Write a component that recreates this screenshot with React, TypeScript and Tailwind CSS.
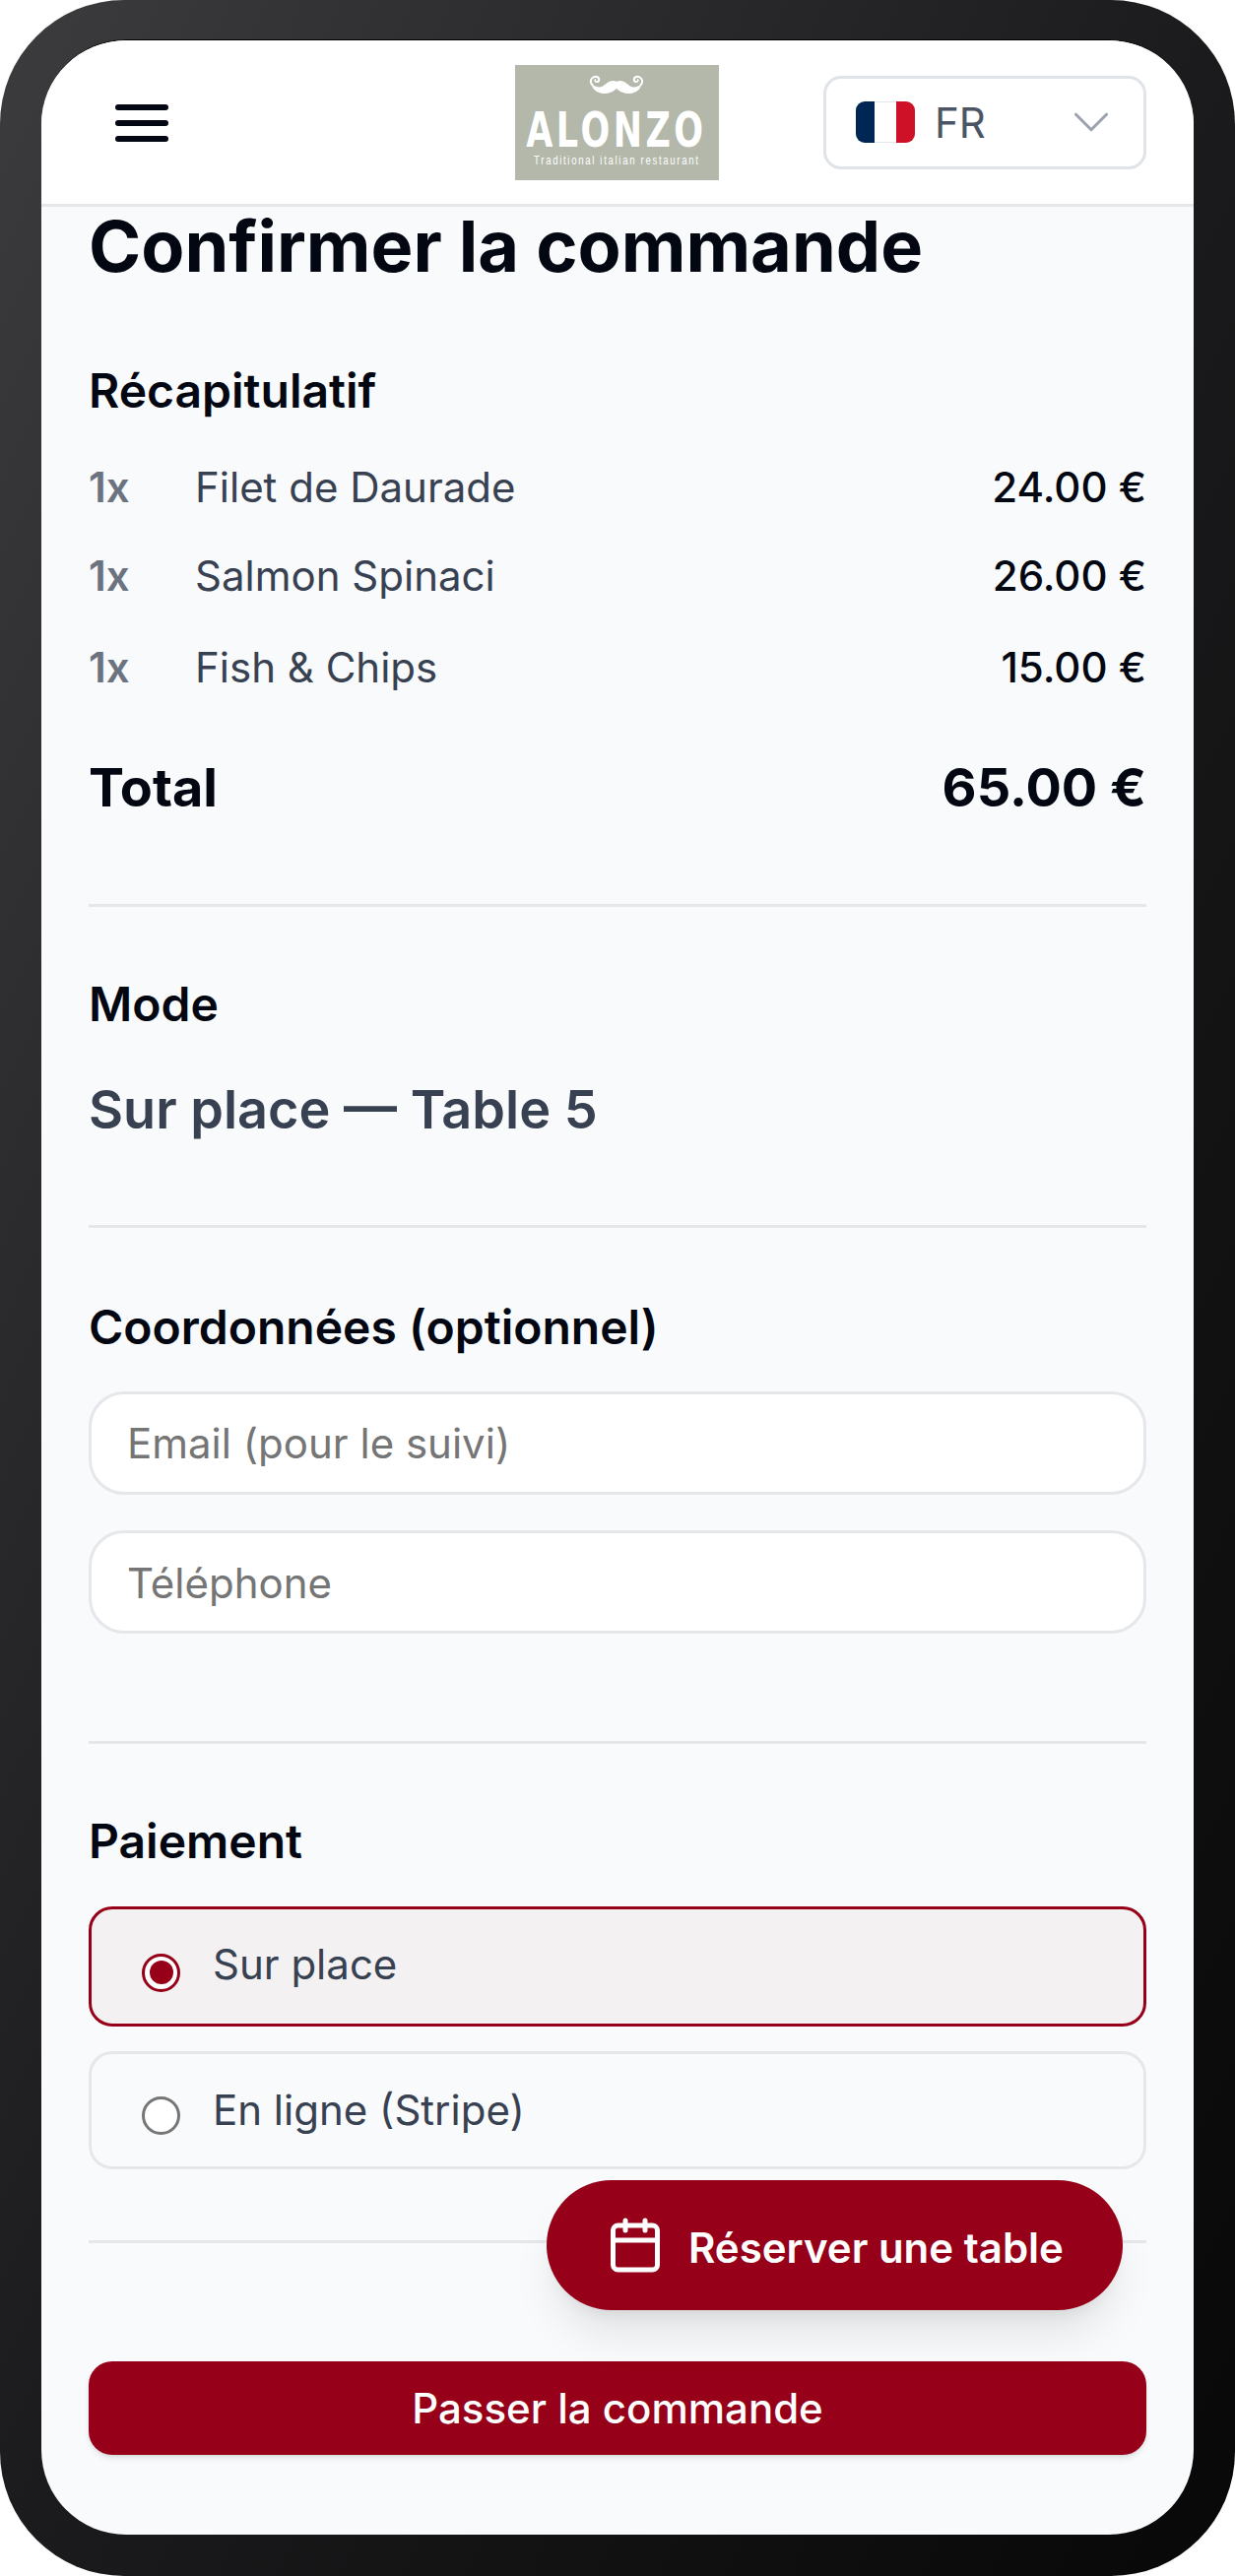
import React from 'react';
import { ChevronDown, Calendar } from 'lucide-react';

const font = { fontFamily: 'Inter, sans-serif' };

const items = [
  { name: 'Filet de Daurade', price: '24.00 €' },
  { name: 'Salmon Spinaci', price: '26.00 €' },
  { name: 'Fish & Chips', price: '15.00 €' },
];

const Logo = () => (
  <div className="w-[207px] h-[117px] -ml-[2px] bg-[#b3b8aa] flex flex-col items-center text-white overflow-hidden">
    <svg className="mt-[10px] shrink-0" width="56" height="22" viewBox="0 0 56 22" fill="none">
      <path d="M28 8C23 5 19 9 15 12C10 15 4 13 2 8C1 4 5 1 8 2C11 3 11 7 8 7C6 7 6 5 7 5" stroke="white" strokeWidth="2" />
      <path d="M28 8C33 5 37 9 41 12C46 15 52 13 54 8C55 4 51 1 48 2C45 3 45 7 48 7C50 7 50 5 49 5" stroke="white" strokeWidth="2" />
      <path d="M28 8C23 6 19 10 15 12C10 15 5 14 3 11C6 20 20 22 28 14C36 22 50 20 53 11C51 14 46 15 41 12C37 10 33 6 28 8Z" fill="white" />
    </svg>
    <div className="mt-[9px] h-[50px] leading-[50px] text-[50px] font-bold tracking-[5px] scale-x-[0.7] whitespace-nowrap" style={{ fontFamily: '"DejaVu Sans", sans-serif' }}>ALONZO</div>
    <div className="mt-[0px] h-[12px] leading-[12px] text-[12px] tracking-[2.1px] scale-x-[0.8] whitespace-nowrap" style={{ fontFamily: '"Liberation Sans", sans-serif' }}>Traditional italian restaurant</div>
  </div>
);

const Divider = ({ className }: { className: string }) => <div className={`h-[3px] bg-[#e5e7eb] ${className}`}></div>;

const App = () => {
  return (
    <div className="w-[1254px] h-[2616px] bg-white overflow-hidden" style={font}>
      <div className="w-full h-full rounded-[126px] bg-linear-to-br from-[#3c3c3e] via-[#1b1b1d] to-[#080808] pl-[42px] pr-[42px] pt-[40px]">
        <div className="relative h-[2534px] rounded-[86px] bg-[#f9fafb] border-t-[1px] border-black overflow-hidden">
          {/* Header */}
          <header className="h-[169px] bg-white border-b-[3px] border-[#e5e7eb] grid grid-cols-[1fr_auto_1fr] items-center px-[48px]">
            <svg width="54" height="38" viewBox="0 0 54 38" fill="none" stroke="#030712" strokeWidth="6" strokeLinecap="round" className="mt-[1px] ml-[27px]">
              <path d="M3 3H51M3 19H51M3 35H51" />
            </svg>
            <Logo />
            <div className="justify-self-end w-[328px] h-[95px] rounded-[18px] border-[3px] border-[#e0e3ea] flex items-center pl-[30px] pr-[22px]">
              <div className="w-[60px] h-[42px] rounded-[9px] overflow-hidden flex">
                <div className="w-[19px] bg-[#002654]"></div>
                <div className="w-[22px] bg-white border-y border-[#e5e7eb]"></div>
                <div className="w-[19px] bg-[#ce1126]"></div>
              </div>
              <span className="ml-[20px] mt-[1px] text-[42px] leading-[60px] text-[#4b5563]">FR</span>
              <ChevronDown size={62} strokeWidth={1.2} className="ml-auto text-[#9ca3af]" />
            </div>
          </header>

          <main className="px-[48px]">
            <h1 className="text-[72px] leading-[80px] font-bold text-[#030712]">Confirmer la commande</h1>

            {/* Recap */}
            <h2 className="mt-[77px] text-[48px] leading-[60px] font-semibold text-[#030712]">Récapitulatif</h2>
            <div className="mt-[38px] flex flex-col gap-[30px]">
              {items.map((item) => (
                <div key={item.name} className="flex items-center h-[60px] last:mt-[3px] text-[42px] leading-[60px]">
                  <span className="w-[108px] font-semibold text-[#6b7280]">1x</span>
                  <span className="text-[#374151]">{item.name}</span>
                  <span className="ml-auto font-medium text-[#030712]">{item.price}</span>
                </div>
              ))}
            </div>
            <div className="mt-[56px] flex items-center justify-between h-[70px] font-bold text-[#030712]">
              <span className="text-[54px]">Total</span>
              <span className="text-[54px]">65.00 €</span>
            </div>
            <Divider className="mt-[84px]" />

            {/* Mode */}
            <h2 className="mt-[69px] text-[48px] leading-[60px] font-semibold text-[#030712]">Mode</h2>
            <p className="mt-[42px] text-[54px] leading-[70px] font-semibold text-[#374151]">Sur place — Table 5</p>
            <Divider className="mt-[82px]" />

            {/* Contact */}
            <h2 className="mt-[71px] text-[48px] leading-[60px] font-semibold text-[#030712]">Coordonnées (optionnel)</h2>
            <input readOnly placeholder="Email (pour le suivi)" className="mt-[35px] block w-full h-[105px] rounded-[36px] bg-white border-[3px] border-[#e5e7eb] px-[36px] text-[42px] outline-none placeholder:text-[#757575]" />
            <input readOnly placeholder="Téléphone" className="mt-[36px] block w-full h-[105px] rounded-[36px] bg-white border-[3px] border-[#e5e7eb] px-[36px] pt-[2px] text-[42px] outline-none placeholder:text-[#757575]" />
            <Divider className="mt-[109px]" />

            {/* Payment */}
            <h2 className="mt-[69px] text-[48px] leading-[60px] font-semibold text-[#030712]">Paiement</h2>
            <div className="mt-[36px] h-[122px] rounded-[24px] border-[3px] border-[#960018] bg-[#f4f1f2] flex items-center pl-[51px]">
              <div className="w-[39px] h-[39px] mt-[12px] rounded-full border-[3px] border-[#960018] bg-white flex items-center justify-center">
                <div className="w-[24px] h-[24px] rounded-full bg-[#960018]"></div>
              </div>
              <span className="ml-[33px] -mt-[4px] text-[42px] leading-[60px] text-[#374151]">Sur place</span>
            </div>
            <div className="mt-[25px] h-[120px] rounded-[24px] border-[3px] border-[#e5e7eb] flex items-center pl-[51px]">
              <div className="w-[39px] h-[39px] mt-[10px] rounded-full border-[3px] border-[#767676] bg-white"></div>
              <span className="ml-[33px] text-[42px] leading-[60px] text-[#374151]">En ligne (Stripe)</span>
            </div>
            <Divider className="mt-[72px]" />

            <button className="mt-[120px] w-full h-[95px] rounded-[24px] bg-[#960018] text-white text-[42px] font-medium shadow-md">Passer la commande</button>
          </main>

          {/* Floating reservation button */}
          <button className="absolute left-[513px] top-[2173px] w-[585px] h-[132px] rounded-full bg-[#960018] text-white flex items-center pl-[60px] shadow-[0_30px_45px_-9px_rgba(0,0,0,0.1),0_12px_18px_-12px_rgba(0,0,0,0.1)]">
            <Calendar size={60} strokeWidth={2} />
            <span className="ml-[24px] mt-[4px] text-[42px] font-semibold">Réserver une table</span>
          </button>
        </div>
      </div>
    </div>
  );
};

export default App;
